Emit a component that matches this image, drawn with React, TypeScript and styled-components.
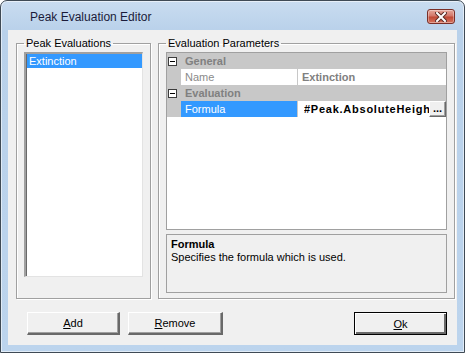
import styled, { createGlobalStyle, css } from "styled-components";

const GlobalStyle = createGlobalStyle`
  html, body {
    margin: 0;
    padding: 0;
    background: #ffffff;
  }
  body {
    font-family: "Liberation Sans", Arial, sans-serif;
    font-size: 11px;
  }
`;

const Window = styled.div`
  width: 465px;
  height: 353px;
  box-sizing: border-box;
  border: 1px solid #3f4a55;
  border-radius: 7px 7px 0 0;
  background: linear-gradient(#c9dcf0 0px, #b9d1ea 30px, #bcd4ed 100%);
  box-shadow: inset 0 0 0 1px rgba(255, 255, 255, 0.55);
  display: flex;
  flex-direction: column;
  overflow: hidden;
`;

const TitleBar = styled.div`
  height: 29px;
  display: flex;
  align-items: center;
  padding: 0 9px 0 29px;
  box-sizing: border-box;
`;

const Title = styled.div`
  flex: 1;
  font-family: "Liberation Sans", Arial, sans-serif;
  font-size: 12px;
  color: #1b1b3a;
  margin-top: 2px;
`;

const CloseButton = styled.div`
  width: 28px;
  height: 15px;
  margin-top: 2px;
  box-sizing: border-box;
  border: 1px solid #7a2f28;
  border-radius: 3px;
  background: linear-gradient(#e6a89c 0%, #d3776a 45%, #c04a36 55%, #d7735e 100%);
  box-shadow: inset 0 0 0 1px rgba(255, 255, 255, 0.35);
  display: flex;
  align-items: center;
  justify-content: center;
`;

const Client = styled.div`
  margin: 0 7px 7px 7px;
  height: 315px;
  background: #f0f0f0;
  display: flex;
  flex-direction: column;
`;

const Groups = styled.div`
  display: flex;
  gap: 7px;
  padding: 7px 0 0 8px;
`;

const Group = styled.fieldset<{ $width: number }>`
  width: ${(p) => p.$width}px;
  min-width: 0;
  height: 262px;
  box-sizing: border-box;
  margin: 0;
  padding: 2px 7px 0 7px;
  border: 1px solid #a0a0a0;
  box-shadow: inset 1px 1px 0 #ffffff, 1px 1px 0 #ffffff;
  display: flex;
  flex-direction: column;
  gap: 4px;
`;

const Legend = styled.legend`
  padding: 0 2px;
  margin-left: 0;
  font-size: 11px;
  line-height: 13px;
  color: #000;
`;

const ListBox = styled.div`
  height: 222px;
  background: #fff;
  border-style: solid;
  border-width: 2px 1px 1px 2px;
  border-color: #a0a0a0 #e3e3e3 #e3e3e3 #a0a0a0;
  box-shadow: inset 1px 1px 0 #696969;
`;

const ListItem = styled.div<{ $selected?: boolean }>`
  height: 14px;
  line-height: 14px;
  padding-left: 2px;
  margin: 0 0 0 1px;
  ${(p) =>
    p.$selected &&
    css`
      background: #3399ff;
      color: #fff;
    `}
`;

const PropertyGrid = styled.div`
  height: 178px;
  box-sizing: border-box;
  border: 1px solid #a0a0a0;
  background: #fff;
  display: flex;
  flex-direction: column;
`;

const CategoryRow = styled.div`
  height: 16px;
  display: flex;
  align-items: center;
  background: #c8c8c8;
  font-weight: bold;
  color: #808080;
`;

const Expander = styled.div`
  width: 9px;
  height: 9px;
  box-sizing: border-box;
  margin: 0 8px 0 1px;
  border: 1px solid #3c3c3c;
  background: #fff;
  display: flex;
  align-items: center;
  justify-content: center;

  &::after {
    content: "";
    width: 5px;
    height: 1px;
    background: #000;
  }
`;

const PropRow = styled.div`
  height: 16px;
  display: flex;
`;

const Margin = styled.div`
  width: 14px;
  background: #c8c8c8;
`;

const NameCell = styled.div<{ $selected?: boolean }>`
  width: 117px;
  padding-left: 4px;
  box-sizing: border-box;
  line-height: 16px;
  border-right: 1px solid #c8c8c8;
  color: ${(p) => (p.$selected ? "#fff" : "#8a8a8a")};
  background: ${(p) => (p.$selected ? "#3399ff" : "#fff")};
`;

const ValueCell = styled.div<{ $muted?: boolean; $wide?: boolean }>`
  flex: 1;
  min-width: 0;
  display: flex;
  align-items: center;
  padding-left: ${(p) => (p.$wide ? 6 : 4)}px;
  font-weight: bold;
  letter-spacing: ${(p) => (p.$wide ? "0.75px" : "normal")};
  color: ${(p) => (p.$muted ? "#808080" : "#000")};
`;

const ValueText = styled.span`
  flex: 1;
  min-width: 0;
  overflow: hidden;
  white-space: nowrap;
`;

const EllipsisButton = styled.div`
  flex: none;
  width: 17px;
  height: 16px;
  box-sizing: border-box;
  background: #f0f0f0;
  border-style: solid;
  border-width: 1px;
  border-color: #fff #696969 #696969 #fff;
  box-shadow: inset -1px -1px 0 #a0a0a0;
  font-weight: bold;
  color: #000;
  letter-spacing: normal;
  line-height: 12px;
  text-align: center;
`;

const Description = styled.div`
  height: 59px;
  box-sizing: border-box;
  border: 1px solid #a0a0a0;
  padding: 3px 4px;
  line-height: 13px;
`;

const DescTitle = styled.div`
  font-weight: bold;
`;

const ButtonRow = styled.div`
  display: flex;
  align-items: center;
  gap: 8px;
  padding: 13px 10px 0 19px;
`;

const Button = styled.div<{ $default?: boolean; $width: number }>`
  width: ${(p) => p.$width}px;
  height: 23px;
  box-sizing: border-box;
  display: flex;
  align-items: center;
  justify-content: center;
  background: #f0f0f0;
  border-style: solid;
  border-width: 1px 2px 2px 1px;
  border-color: #fff #696969 #696969 #fff;
  box-shadow: inset -1px -1px 0 #a0a0a0;
  ${(p) =>
    p.$default &&
    css`
      margin-left: auto;
      border: 1px solid #000;
      box-shadow: inset 1px 1px 0 #fff, inset -2px -2px 0 #696969;
    `}

  u {
    text-decoration: underline;
  }
`;

export default function App() {
  return (
    <>
      <GlobalStyle />
      <Window>
        <TitleBar>
          <Title>Peak Evaluation Editor</Title>
          <CloseButton>
            <svg width="12" height="10" viewBox="0 0 12 10">
              <path
                d="M2 1 L10 9 M10 1 L2 9"
                stroke="#5a2a24"
                strokeWidth="4"
                strokeLinecap="square"
              />
              <path
                d="M2 1 L10 9 M10 1 L2 9"
                stroke="#ffffff"
                strokeWidth="2"
                strokeLinecap="square"
              />
            </svg>
          </CloseButton>
        </TitleBar>
        <Client>
          <Groups>
            <Group $width={135}>
              <Legend>Peak Evaluations</Legend>
              <ListBox>
                <ListItem $selected>Extinction</ListItem>
              </ListBox>
            </Group>
            <Group $width={297}>
              <Legend>Evaluation Parameters</Legend>
              <PropertyGrid>
                <CategoryRow>
                  <Expander />
                  General
                </CategoryRow>
                <PropRow>
                  <Margin />
                  <NameCell>Name</NameCell>
                  <ValueCell $muted>
                    <ValueText>Extinction</ValueText>
                  </ValueCell>
                </PropRow>
                <CategoryRow>
                  <Expander />
                  Evaluation
                </CategoryRow>
                <PropRow>
                  <Margin />
                  <NameCell $selected>Formula</NameCell>
                  <ValueCell $wide>
                    <ValueText>#Peak.AbsoluteHeight</ValueText>
                    <EllipsisButton>...</EllipsisButton>
                  </ValueCell>
                </PropRow>
              </PropertyGrid>
              <Description>
                <DescTitle>Formula</DescTitle>
                <div>Specifies the formula which is used.</div>
              </Description>
            </Group>
          </Groups>
          <ButtonRow>
            <Button $width={93}>
              <span>
                <u>A</u>dd
              </span>
            </Button>
            <Button $width={95}>
              <span>
                <u>R</u>emove
              </span>
            </Button>
            <Button $width={93} $default>
              <span>
                <u>O</u>k
              </span>
            </Button>
          </ButtonRow>
        </Client>
      </Window>
    </>
  );
}
